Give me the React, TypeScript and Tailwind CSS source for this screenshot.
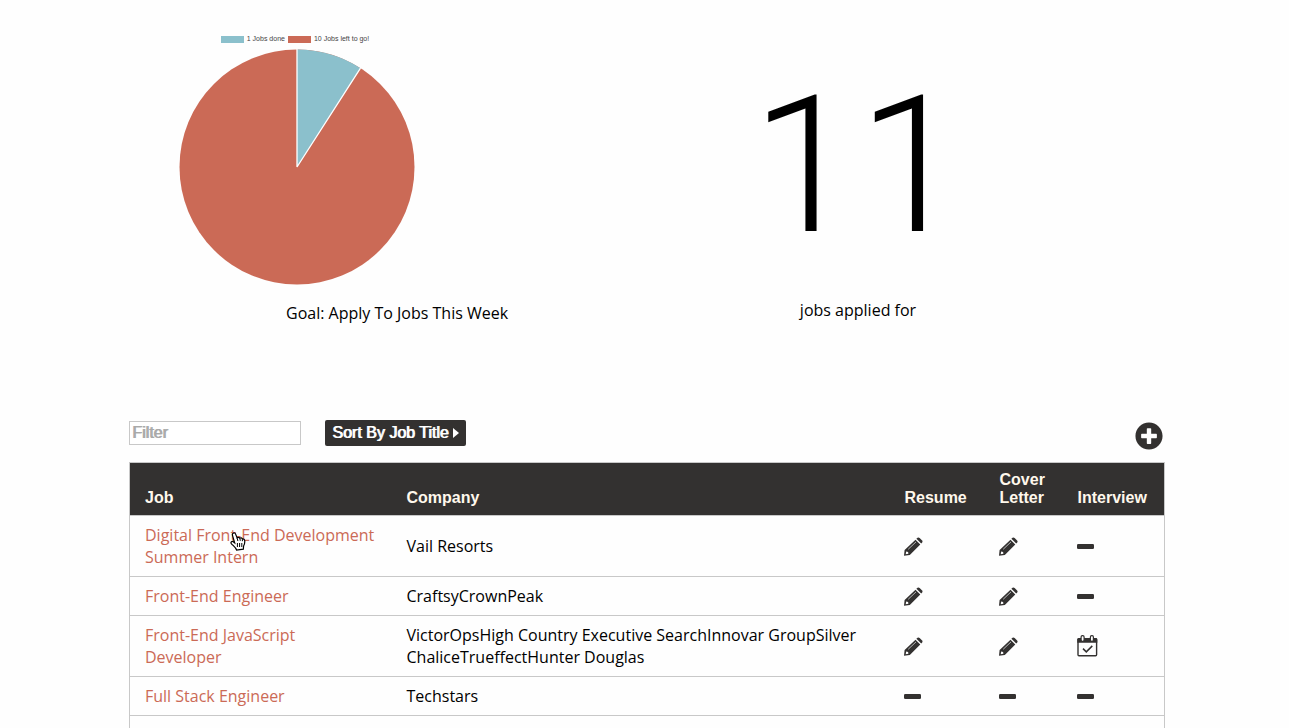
import { FaPlusCircle } from "react-icons/fa";

type Mark = "done" | "none" | "booked";

interface Job {
  title: string;
  company: string;
  resume: Mark;
  cover: Mark;
  interview: Mark;
}

const jobs: Job[] = [
  { title: "Digital Front-End Development Summer Intern", company: "Vail Resorts", resume: "done", cover: "done", interview: "none" },
  { title: "Front-End Engineer", company: "CraftsyCrownPeak", resume: "done", cover: "done", interview: "none" },
  { title: "Front-End JavaScript Developer", company: "VictorOpsHigh Country Executive SearchInnovar GroupSilver ChaliceTrueffectHunter Douglas", resume: "done", cover: "done", interview: "booked" },
  { title: "Full Stack Engineer", company: "Techstars", resume: "none", cover: "none", interview: "none" },
];

function Pencil() {
  return (
    <svg viewBox="0 0 19 19" className="block h-[19px] w-[19px]" role="img" aria-label="Done">
      <path fill="#333130" d="M12.4 1.8 13.5.8Q14.6 0 15.6.9L18.1 3.4Q19 4.4 18.2 5.4L17.2 6.6Z" />
      <path fill="#333130" fillRule="evenodd" d="M11.5 2.7 16.3 7.5 5.8 18 0 18.7.6 12.9Z M2.2 14.6 1.7 17.2 4.4 16.8 4.1 15.1Z" />
      <path stroke="#d8d8d8" strokeWidth=".8" d="M4.2 12.3 12 4.9" />
    </svg>
  );
}

function Dash() {
  return (
    <svg viewBox="0 0 17 5" className="block h-[5px] w-[17px]" role="img" aria-label="None">
      <rect width="17" height="5" rx="1.3" fill="#333130" />
    </svg>
  );
}

function CalendarCheck() {
  return (
    <svg viewBox="0 0 21 22" className="block h-[22px] w-[21px]" role="img" aria-label="Scheduled">
      <rect x="1" y="4" width="18.6" height="16.8" rx="1" fill="none" stroke="#333130" strokeWidth="1.4" />
      <path fill="#333130" d="M.3 7.8V4.3Q.3 3 1.6 3H19Q20.3 3 20.3 4.3V7.8Z" />
      <rect x="4.1" y=".7" width="3" height="5.6" rx="1.3" fill="#fff" stroke="#333130" strokeWidth="1.2" />
      <rect x="13.4" y=".7" width="3" height="5.6" rx="1.3" fill="#fff" stroke="#333130" strokeWidth="1.2" />
      <path d="m6 13.6 3.3 3.3 6-6" fill="none" stroke="#333130" strokeWidth="1.5" />
    </svg>
  );
}

function MarkIcon({ mark }: { mark: Mark }) {
  if (mark === "done") return <Pencil />;
  if (mark === "booked") return <CalendarCheck />;
  return <Dash />;
}

function Pie() {
  return (
    <svg viewBox="0 0 236 236" className="block h-[236px] w-[236px]" role="img" aria-label="1 job done, 10 left">
      <circle cx="118" cy="118" r="117.5" fill="#cb6a56" />
      <path d="M118 118V.5A117.5 117.5 0 0 1 181.5 19.2Z" fill="#8bc0cc" />
      <path d="M118 0V118L181.5 19.2" fill="none" stroke="#fff" strokeWidth="1.3" strokeLinejoin="bevel" />
    </svg>
  );
}

function Hand() {
  return (
    <svg viewBox="0 0 16 19" className="pointer-events-none absolute top-2 left-[85px] h-[19px] w-4" aria-hidden="true">
      <path
        d="M3.2 1.2C4.2.6 5.2 1.1 5.6 2.1L7.1 5.8C8.3 5.1 9.2 5.4 9.8 6.2 10.8 5.6 11.9 5.9 12.3 6.9 13.7 6.6 14.5 7.3 14.7 8.7 15 11 14.7 12.2 13.6 14L13.3 17.2 6.6 18 C6 15.7 3.6 14 1.5 11.8 .2 10.3 1.8 8.9 3.2 9.8L4.7 10.9 2.5 3.4C2.2 2.4 2.4 1.6 3.2 1.2Z"
        fill="#fff"
        stroke="#000"
        strokeWidth="1.2"
      />
      <path d="M7.4 11v4M9.6 11v4M11.8 11v4M7.1 6l.8 3M9.9 6.5l.4 2.3M12.4 7.2v2" stroke="#000" strokeWidth="1" />
    </svg>
  );
}

export default function App() {
  return (
    <main className="h-screen overflow-hidden bg-[#fefefe] pr-[124px] pl-[129px] font-['Open_Sans',sans-serif] text-base leading-[22px] text-black">
      <section className="grid h-[420px] grid-cols-2">
        <div className="flex flex-col pt-[34px]">
          <div className="flex w-[336px] flex-col items-center">
            <div className="flex h-[10px] items-center gap-[3px] pr-1 font-['Liberation_Sans',sans-serif] text-[7px] leading-[10px] text-[#444]">
              <span className="h-[7px] w-[23px] bg-[#8bc0cc]" />
              <span>1 Jobs done</span>
              <span className="h-[7px] w-[23px] bg-[#cb6a56]" />
              <span>10 Jobs left to go!</span>
            </div>
            <div className="pt-[5px]">
              <Pie />
            </div>
          </div>
          <p className="ml-[157px] pt-[17px]">Goal: Apply To Jobs This Week</p>
        </div>
        <div className="flex w-[422px] flex-col items-center pt-[52px]">
          <p className="font-['Roboto',sans-serif] text-[192px] leading-[228px] font-light">11</p>
          <p className="pt-[19px]">jobs applied for</p>
        </div>
      </section>

      <div className="flex items-start justify-between font-['Liberation_Sans',sans-serif]">
        <div className="flex gap-6">
          <input
            type="text"
            aria-label="Filter"
            placeholder="Filter"
            className="mt-px h-6 w-[172px] border border-[#c8c8c8] bg-white px-[2px] leading-5 placeholder:text-[#a9a9a9] placeholder:[text-shadow:1px_0_#a9a9a9]"
          />
          <button type="button" className="flex h-[26px] items-center gap-1 rounded-xs bg-[#333130] px-[7px] leading-5 text-white [text-shadow:1px_0_#ffffff]">
            Sort By Job Title
            <svg viewBox="0 0 6 10" className="h-[10px] w-[6px]" aria-hidden="true">
              <path d="M0 0 6 5 0 10Z" fill="#fff" />
            </svg>
          </button>
        </div>
        <button type="button" aria-label="Add job" className="mt-[2px] mr-[2px]">
          <FaPlusCircle className="block h-7 w-7 text-[#333130]" />
        </button>
      </div>

      <table className="mt-3 w-full table-fixed border-collapse border border-[#c8c8c8] text-left">
        <colgroup>
          <col className="w-[261px]" />
          <col />
          <col className="w-[95px]" />
          <col className="w-[78px]" />
          <col className="w-[103px]" />
        </colgroup>
        <thead>
          <tr className="h-[53px] bg-[#333130] align-bottom font-['Liberation_Sans',sans-serif] leading-[18px] text-[#fff8ec]">
            <th className="pb-2 pl-[15px]">Job</th>
            <th className="pb-2 pl-4">Company</th>
            <th className="pb-2 pl-4">Resume</th>
            <th className="pb-2 pl-4">Cover Letter</th>
            <th className="pb-2 pl-4">Interview</th>
          </tr>
        </thead>
        <tbody>
          {jobs.map((job, i) => (
            <tr key={job.title} className="border-y border-[#c8c8c8]">
              <td className="py-2 pr-4 pl-[15px] text-[#cb6a56]">
                <div className="relative">
                  <a href="#job">{job.title}</a>
                  {i === 0 && <Hand />}
                </div>
              </td>
              <td className="py-2 pr-8 pl-4">{job.company}</td>
              <td className="pl-[15px]"><MarkIcon mark={job.resume} /></td>
              <td className="pl-[15px]"><MarkIcon mark={job.cover} /></td>
              <td className="pl-[15px]"><MarkIcon mark={job.interview} /></td>
            </tr>
          ))}
          <tr className="h-10">
            <td colSpan={5} />
          </tr>
        </tbody>
      </table>
    </main>
  );
}
